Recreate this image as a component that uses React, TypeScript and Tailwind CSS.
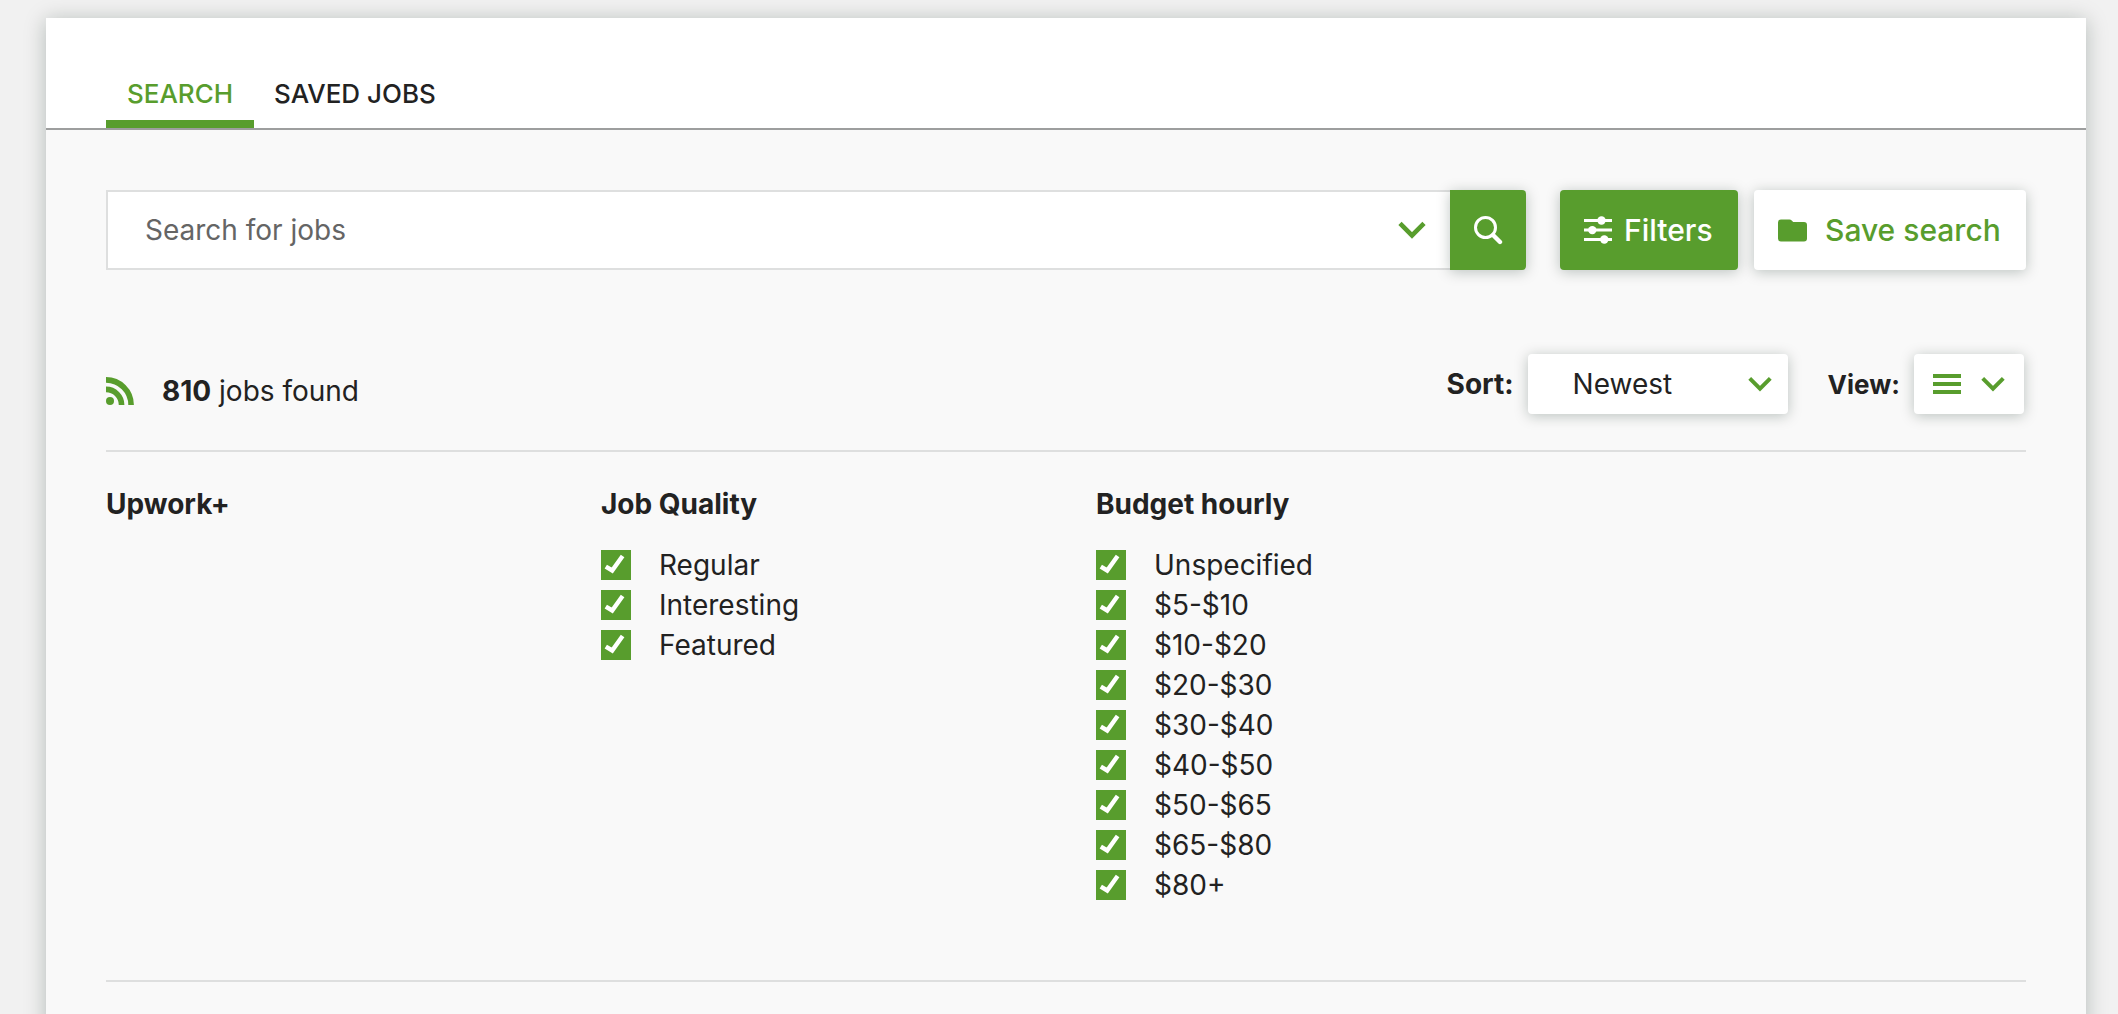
import React, { useState } from "react";

function Chevron({ className }: { className: string }) {
  return (
    <svg viewBox="0 0 28 18" className={className} fill="none" stroke="#589d2d" strokeWidth="4.6" aria-hidden="true">
      <path d="M2 2.4 14 14.4 26 2.4" />
    </svg>
  );
}

function Checkbox({ id, label }: { id: string; label: string }) {
  const [checked, setChecked] = useState(true);
  return (
    <li className="flex h-10 items-center gap-7">
      <span className="grid size-[30px] shrink-0">
        <input
          id={id}
          type="checkbox"
          checked={checked}
          onChange={() => setChecked(!checked)}
          className="peer size-[30px] appearance-none border-2 border-[#589d2d] bg-white [grid-area:1/1] checked:bg-[#589d2d]"
        />
        <svg
          viewBox="0 0 30 30"
          className="pointer-events-none invisible size-[30px] [grid-area:1/1] peer-checked:visible"
          fill="none"
          stroke="#fff"
          strokeWidth="4.4"
          aria-hidden="true"
        >
          <path d="M4.800 16.600 11.200 20.500 21.600 6" />
        </svg>
      </span>
      <label htmlFor={id} className="text-[28px] leading-10">
        {label}
      </label>
    </li>
  );
}

const groups = [
  { title: "Upwork+", options: [] as string[] },
  { title: "Job Quality", options: ["Regular", "Interesting", "Featured"] },
  {
    title: "Budget hourly",
    options: [
      "Unspecified",
      "$5-$10",
      "$10-$20",
      "$20-$30",
      "$30-$40",
      "$40-$50",
      "$50-$65",
      "$65-$80",
      "$80+",
    ],
  },
];

export default function App() {
  return (
    <div className="min-h-screen overflow-hidden bg-[#f1f1f1] pt-[18px] pr-8 pl-[46px] font-['Inter',sans-serif] text-[28px] text-[#222]">
      <main className="min-h-screen bg-[#f9f9f9] shadow-[0_2px_20px_rgba(0,30,20,0.25)]">
        <nav className="flex border-b-2 border-[#9d9e9e] bg-white px-[60px] pt-12 text-[26px] font-medium">
          <a href="#search" className="flex h-[62px] min-w-[148px] items-center justify-center border-b-8 border-[#589d2d] px-5 text-[#589d2d]">
            SEARCH
          </a>
          <a href="#saved" className="flex h-[62px] items-center border-b-8 border-transparent px-5">
            SAVED JOBS
          </a>
        </nav>

        <div className="px-[60px] pt-[60px]">
          <form className="flex h-20" onSubmit={(e) => e.preventDefault()}>
            <div className="flex min-w-0 flex-1 items-center border-2 border-r-0 border-[#dedfdf] bg-white pr-6">
              <input
                type="text"
                aria-label="Search for jobs"
                placeholder="Search for jobs"
                className="h-full min-w-0 flex-1 bg-transparent pl-[37px] placeholder:text-[#656565] outline-none"
              />
              <button type="button" aria-label="Show search options" className="shrink-0">
                <Chevron className="h-[18px] w-7" />
              </button>
            </div>
            <button
              type="submit"
              aria-label="Search"
              className="flex w-[76px] shrink-0 items-center justify-center rounded-r bg-[#589d2d] shadow-[0_2px_14px_rgba(0,30,20,0.25)]"
            >
              <svg viewBox="0 0 30 30" className="size-[30px]" fill="none" stroke="#fff" aria-hidden="true">
                <circle cx="12.5" cy="12.5" r="10" strokeWidth="3" />
                <path d="M20 20 27 27" strokeWidth="4.4" strokeLinecap="round" />
              </svg>
            </button>
            <button
              type="button"
              className="ml-[34px] flex w-[178px] shrink-0 items-center gap-3 rounded bg-[#589d2d] pl-6 text-[30px] font-medium text-white shadow-[0_2px_14px_rgba(0,30,20,0.25)]"
            >
              <svg viewBox="0 0 28 28" className="size-7 shrink-0" fill="#fff" aria-hidden="true">
                <path d="M0 3h28v3H0zM0 12.6h28v3H0zM0 22h28v3H0z" />
                <circle cx="17.5" cy="4.5" r="4.2" />
                <circle cx="8.3" cy="14.1" r="4.2" />
                <circle cx="20.3" cy="23.5" r="4.2" />
              </svg>
              Filters
            </button>
            <button
              type="button"
              className="ml-4 flex w-[272px] shrink-0 items-center gap-[18px] rounded bg-white pl-6 text-[30px] font-medium text-[#589d2d] shadow-[0_2px_14px_rgba(0,30,20,0.25)]"
            >
              <svg viewBox="0 0 29 23" className="h-[23px] w-[29px] shrink-0" fill="#589d2d" aria-hidden="true">
                <path d="M3 0.5h8.5a3 3 0 0 1 2.2 1L15.2 3H26a3 3 0 0 1 3 3v13.500a3 3 0 0 1-3 3H3a3 3 0 0 1-3-3v-16a3 3 0 0 1 3-3z" />
              </svg>
              Save search
            </button>
          </form>

          <section className="mt-[84px] flex h-[98px] items-start justify-between border-b-2 border-[#dedfdf] pr-[2px]">
            <div className="flex h-[74px] items-center gap-7">
              <svg viewBox="0 0 28 28" className="size-7" fill="none" stroke="#589d2d" aria-hidden="true">
                <circle cx="4" cy="24" r="4" fill="#589d2d" stroke="none" />
                <path d="M0 12.4A15.600 15.600 0 0 1 15.600 28M0 2.900A25.100 25.100 0 0 1 25.100 28" strokeWidth="5.6" />
              </svg>
              <p>
                <b>810</b> jobs found
              </p>
            </div>
            <div className="flex items-center">
              <label htmlFor="sort" className="mr-[14px] font-bold">
                Sort:
              </label>
              <div className="grid h-[60px] w-[260px] items-center rounded bg-white shadow-[0_2px_14px_rgba(0,30,20,0.25)]">
                <select id="sort" className="h-full w-full appearance-none bg-transparent pl-[45px] outline-none [grid-area:1/1]">
                  <option>Newest</option>
                </select>
                <span className="pointer-events-none mr-4 justify-self-end [grid-area:1/1]">
                  <Chevron className="h-4 w-6" />
                </span>
              </div>
              <span id="view-label" className="mr-[14px] ml-10 text-[26px] font-bold">
                View:
              </span>
              <button
                type="button"
                aria-labelledby="view-label"
                className="flex h-[60px] w-[110px] items-center gap-5 rounded bg-white pl-[19px] shadow-[0_2px_14px_rgba(0,30,20,0.25)]"
              >
                <svg viewBox="0 0 28 22" className="h-[22px] w-7" fill="#589d2d" aria-hidden="true">
                  <path d="M0 1h28v4H0zM0 9h28v4H0zM0 17h28v4H0z" />
                </svg>
                <Chevron className="h-4 w-6" />
              </button>
            </div>
          </section>

          <section className="grid h-[530px] grid-cols-4 gap-x-[60px] border-b-2 border-[#dedfdf] pt-8">
            {groups.map((group, g) => (
              <fieldset key={group.title}>
                <legend className="mb-[21px] leading-10 font-bold">{group.title}</legend>
                <ul>
                  {group.options.map((option, i) => (
                    <Checkbox key={option} id={`filter-${g}-${i}`} label={option} />
                  ))}
                </ul>
              </fieldset>
            ))}
          </section>
        </div>
      </main>
    </div>
  );
}
